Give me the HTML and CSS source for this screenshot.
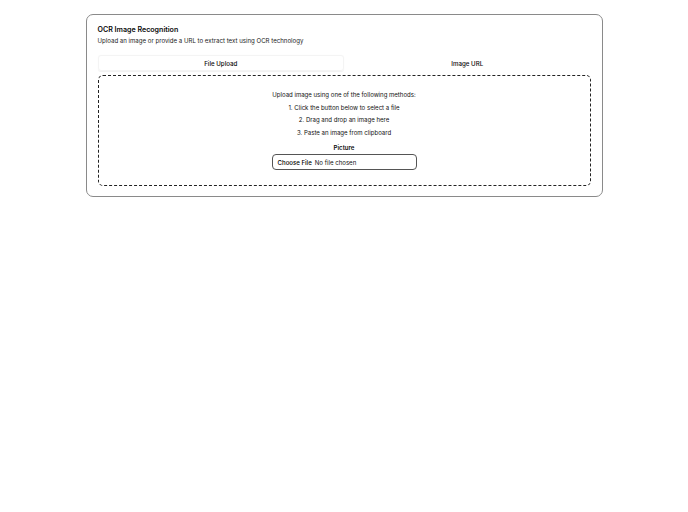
FILE: index.html
```html
<!DOCTYPE html>
<html>
<head>
<meta charset="utf-8">
<link rel="stylesheet" href="styles.css">
</head>
<body>
<div class="page">
  <div class="card">
    <div class="card-header">
      <h1 class="title">OCR Image Recognition</h1>
      <p class="desc">Upload an image or provide a URL to extract text using OCR technology</p>
    </div>
    <div class="tabs">
      <div class="tab active">File Upload</div>
      <div class="tab">Image URL</div>
    </div>
    <div class="dropzone">
      <p class="line">Upload image using one of the following methods:</p>
      <p class="line">1. Click the button below to select a file</p>
      <p class="line">2. Drag and drop an image here</p>
      <p class="line">3. Paste an image from clipboard</p>
      <div class="label">Picture</div>
      <div class="file-input"><span class="choose">Choose File</span> No file chosen</div>
    </div>
  </div>
</div>
</body>
</html>
```
FILE: styles.css
```css
* { box-sizing: border-box; }
html, body { margin: 0; padding: 0; background: #fff; }
body { font-family: Inter, "Noto Sans", sans-serif; color: #0a0a0a; }
.page { padding-top: 14px; display: flex; justify-content: center; }
.card {
  width: 517px;
  border: 1px solid #8a8a8a;
  border-radius: 7px;
  padding: 10px 11px 10px 11px;
}
.card-header { display: flex; flex-direction: column; gap: 2px; }
.title { margin: 0; font-size: 7.1px; font-weight: 600; line-height: 10px; }
.desc { margin: 0; font-size: 6.1px; line-height: 8px; color: #222; }
.tabs {
  margin-top: 10px;
  display: grid;
  grid-template-columns: 1fr 1fr;
  height: 16px;
}
.tab {
  font-size: 6.2px; font-weight: 500; display: flex; align-items: center; justify-content: center;
  border-radius: 3px;
}
.tab.active { box-shadow: 0 0.5px 1px rgba(0,0,0,0.06); border: 0.5px solid #f4f4f4; }
.dropzone {
  margin-top: 4px;
  border: 1px dashed #222;
  border-radius: 5px;
  padding: 13px 0 15px;
  display: flex; flex-direction: column; align-items: center;
}
.line { margin: 0; font-size: 6.05px; line-height: 12.5px; color: #111; }
.label { margin-top: 4px; font-size: 6.1px; font-weight: 600; line-height: 10px; }
.file-input {
  margin-top: 1px;
  width: 145px; height: 16px;
  border: 1px solid #555;
  border-radius: 4px;
  font-size: 6.1px;
  display: flex; align-items: center;
  padding-left: 5px;
  gap: 3px;
  color: #111;
}
.choose { font-weight: 500; color: #000; }
```
